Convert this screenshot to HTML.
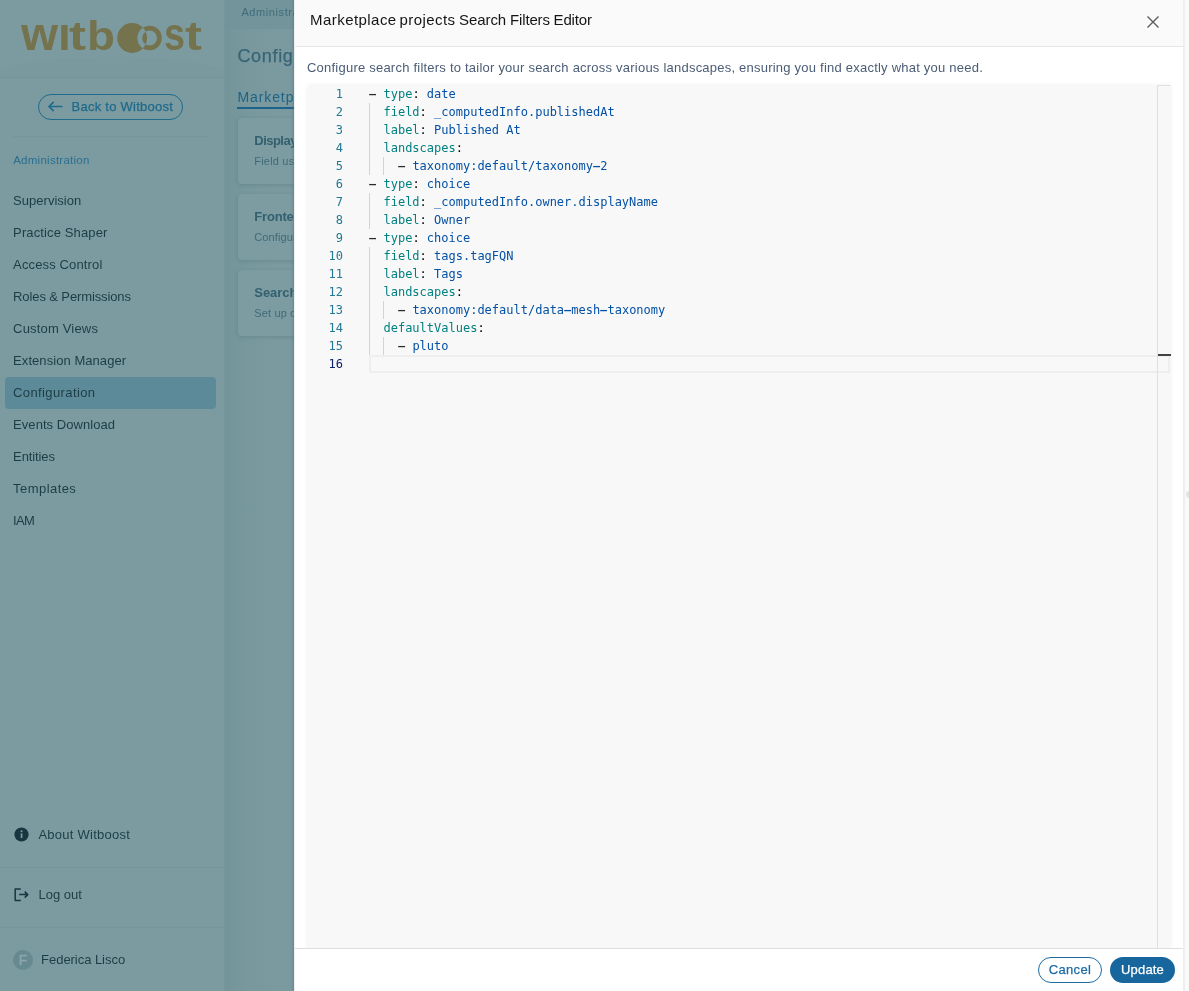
<!DOCTYPE html>
<html lang="en">
<head>
<meta charset="utf-8">
<title>Witboost - Configuration</title>
<style>
*{box-sizing:border-box;margin:0;padding:0}
html,body{width:1189px;height:991px;overflow:hidden;background:#79989d;font-family:"Liberation Sans",sans-serif}
.t{position:absolute;white-space:nowrap}
#sidebar,#main,#drawer,#editor{will-change:transform}
#sidebar{position:absolute;left:0;top:0;width:225px;height:991px;background:#7c9ba0;z-index:2;border-right:1px solid #75979c}
#main{position:absolute;left:224px;top:0;width:80px;height:991px;background:linear-gradient(90deg,#739499 0,#75969a 10px,#78989d 24px,#7a999e 38px,#7b9a9f 52px,#7b9a9f 100%);overflow:hidden}
#crumb{position:absolute;left:0;top:0;width:80px;height:29px;background:#73949a}
.hr{position:absolute;height:1px;background:#769599}
#sel{position:absolute;left:5px;top:377px;width:211px;height:32px;border-radius:4px;background:#5c8a98}
#back{position:absolute;left:38px;top:94px;width:145px;height:26px;border:1px solid #216b8c;border-radius:13px}
.card{position:absolute;left:14px;width:80px;height:66px;background:#7d9ca1;border-radius:4px;box-shadow:0 1px 4px rgba(50,85,95,.24)}
#tabline{position:absolute;left:13px;top:107px;width:80px;height:2px;background:#1b638a}
#drawer{position:absolute;left:294px;top:0;width:890px;height:991px;background:#fff;z-index:3;border-left:1px solid #edf0f0;box-shadow:-1px 0 2px rgba(80,115,125,.55)}
#dhead{position:absolute;left:0;top:0;right:0;height:47px;background:#fafafa;border-bottom:1px solid #e6e6e6}
#strip{position:absolute;left:1183px;top:0;width:6px;height:991px;background:#fafafa;z-index:4;overflow:hidden;border-left:2px solid #eeeeee}
#knob{position:absolute;left:1px;top:490.7px;width:7.5px;height:7.5px;border-radius:4px;background:#e3e3e3}
#editor{position:absolute;left:12px;top:85px;width:864px;height:863px;background:#f8f8f8;border-radius:4px 0 0 0;box-shadow:0 0 4px rgba(0,0,0,.06);overflow:hidden;font-family:"DejaVu Sans Mono","Liberation Mono",monospace;font-size:12px}
.ln{position:absolute;left:0;width:36px;text-align:right;height:18px;line-height:18px;color:#237893}
.ln.cur{color:#0b216f}
.cl{position:absolute;left:62px;height:18px;line-height:18px;white-space:pre}
.k{color:#008080}.p{color:#000}.v{color:#0451a5}.d{display:inline-block;transform:translateY(-0.5px) scale(2.25,1.3)}.p .d{color:#2b2b2b}
.g{position:absolute;width:1px;background:#d3d3d3}
#curline{position:absolute;left:62px;top:270px;width:801px;height:18px;border:2px solid #eeeeee}
#ruler{position:absolute;left:850px;top:0;width:14px;height:863px;border-left:1px solid #e0e0e0;border-top:1px solid #e0e0e0}
#rmark{position:absolute;left:0;top:268px;width:13px;height:2px;background:#424242}
#dfoot{position:absolute;left:0;right:0;top:948px;height:43px;border-top:1px solid #dedede;background:#fff}
.btn{position:absolute;top:957px;height:26px;border-radius:13px;padding:0;margin:0;font-family:"Liberation Sans",sans-serif;font-size:13px;line-height:18px;text-align:center;appearance:none;-webkit-appearance:none;display:block}
</style>
</head>
<body>
<div id="main">
<div id="crumb"></div>
<div id="tabline"></div>
<div class="card" style="top:118px"></div>
<div class="card" style="top:194px"></div>
<div class="card" style="top:270px"></div>
<div class="t" style="left:17.4px;top:5.2px;font-size:11px;line-height:15px;color:#3e6c7d;letter-spacing:0.593px">Administration</div>
<div class="t" style="left:13.4px;top:43.5px;font-size:18px;line-height:25px;color:#376577;letter-spacing:0.686px;-webkit-text-stroke:0.25px #376577">Configuration</div>
<div class="t" style="left:13.4px;top:86.5px;font-size:14px;line-height:20px;color:#1d6487;letter-spacing:0.912px">Marketplace</div>
<div class="t" style="left:30.3px;top:131.9px;font-size:13px;line-height:18px;color:#33606f;letter-spacing:-0.530px;font-weight:bold">Display name</div>
<div class="t" style="left:30.3px;top:153.8px;font-size:11px;line-height:15px;color:#3f6a78;letter-spacing:0.190px">Field used</div>
<div class="t" style="left:30.3px;top:207.9px;font-size:13px;line-height:18px;color:#33606f;letter-spacing:-0.200px;font-weight:bold">Frontend</div>
<div class="t" style="left:30.3px;top:229.8px;font-size:11px;line-height:15px;color:#3f6a78;letter-spacing:0.120px">Configure</div>
<div class="t" style="left:30.3px;top:283.9px;font-size:13px;line-height:18px;color:#33606f;letter-spacing:-0.050px;font-weight:bold">Search filters</div>
<div class="t" style="left:30.3px;top:305.8px;font-size:11px;line-height:15px;color:#3f6a78;letter-spacing:0.130px">Set up custom</div>
</div>
<nav id="sidebar">
<svg id="logo" style="position:absolute;left:0;top:0" width="224" height="77" viewBox="0 0 224 77">
<g fill="#74734d" font-family="Liberation Sans, sans-serif" font-weight="bold" font-size="46">
<text x="21" y="50.3" textLength="37" lengthAdjust="spacingAndGlyphs">w</text>
<text x="58" y="50.3">ı</text>
<text x="69" y="50.3" font-size="41" textLength="17" lengthAdjust="spacingAndGlyphs">t</text>
<text x="87" y="50.3" font-size="41" textLength="28" lengthAdjust="spacingAndGlyphs">b</text>
<text x="164" y="50.3" textLength="21" lengthAdjust="spacingAndGlyphs">s</text>
<text x="185" y="50.3" font-size="41" textLength="17" lengthAdjust="spacingAndGlyphs">t</text>
</g>
<path fill="#74734d" fill-rule="evenodd" d="M117.2 38a14.9 14.9 0 1 0 29.8 0a14.9 14.9 0 1 0 -29.8 0zM137.35 38a12.25 12.25 0 1 0 24.5 0a12.25 12.25 0 1 0 -24.5 0zM142.2 38a7.4 7.4 0 1 0 14.8 0a7.4 7.4 0 1 0 -14.8 0z"/>
</svg>
<div style="position:absolute;left:0;top:54px;width:224px;height:23px;background:radial-gradient(ellipse 125px 21px at 112px 23px,rgba(40,80,90,.028) 0,rgba(40,80,90,.028) 92%,rgba(40,80,90,0) 100%)"></div>
<div class="hr" style="left:0;top:77px;width:224px"></div>
<div id="back"></div>
<div class="hr" style="left:13px;top:136px;width:195px"></div>
<div id="sel"></div>
<div class="hr" style="left:0;top:867px;width:224px"></div>
<div class="hr" style="left:0;top:927px;width:224px"></div>
<svg style="position:absolute;left:46px;top:99px" width="18" height="15" viewBox="0 0 18 15"><path d="M15.8 7.5H3M7.2 3.4L3 7.5l4.2 4.1" fill="none" stroke="#1f6a8b" stroke-width="1.7" stroke-linecap="round" stroke-linejoin="round"/></svg>
<svg style="position:absolute;left:13px;top:826px" width="17" height="17" viewBox="0 0 17 17"><circle cx="8.5" cy="8.5" r="7.1" fill="#17363f"/><rect x="7.7" y="7.4" width="1.7" height="4.6" fill="#7c9ba0"/><circle cx="8.55" cy="5.3" r="1.05" fill="#7c9ba0"/></svg>
<svg style="position:absolute;left:12px;top:886px" width="19" height="17" viewBox="0 0 19 17"><path d="M8.8 2.9H3.2v11.5h5.6M7.2 8.6h8.2M12.7 5.6l3 3l-3 3" fill="none" stroke="#17363f" stroke-width="1.5" stroke-linejoin="round" stroke-linecap="butt"/></svg>
<div style="position:absolute;left:13px;top:950px;width:20px;height:20px;border-radius:10px;background:#678990;color:#8ca7ab;font-size:14px;line-height:20px;text-align:center;-webkit-text-stroke:0.3px #8ca7ab">F</div>
<div class="t" style="left:71.6px;top:97.5px;font-size:13px;line-height:18px;color:#1f6a8b;letter-spacing:0.247px;-webkit-text-stroke:0.25px #1f6a8b">Back to Witboost</div>
<div class="t" style="left:13.2px;top:152.3px;font-size:11.5px;line-height:16px;color:#2a6f8f;letter-spacing:0.259px">Administration</div>
<div class="t" style="left:13.1px;top:191.5px;font-size:13px;line-height:18px;color:#1d3d46;letter-spacing:0.024px">Supervision</div>
<div class="t" style="left:13.1px;top:223.5px;font-size:13px;line-height:18px;color:#1d3d46;letter-spacing:0.127px">Practice Shaper</div>
<div class="t" style="left:13.1px;top:255.5px;font-size:13px;line-height:18px;color:#1d3d46;letter-spacing:0.141px">Access Control</div>
<div class="t" style="left:13.1px;top:287.5px;font-size:13px;line-height:18px;color:#1d3d46;letter-spacing:-0.113px">Roles &amp; Permissions</div>
<div class="t" style="left:13.1px;top:319.5px;font-size:13px;line-height:18px;color:#1d3d46;letter-spacing:0.180px">Custom Views</div>
<div class="t" style="left:13.1px;top:351.5px;font-size:13px;line-height:18px;color:#1d3d46;letter-spacing:0.058px">Extension Manager</div>
<div class="t" style="left:13.1px;top:383.5px;font-size:13px;line-height:18px;color:#1d3d46;letter-spacing:0.382px">Configuration</div>
<div class="t" style="left:13.1px;top:415.5px;font-size:13px;line-height:18px;color:#1d3d46;letter-spacing:0.055px">Events Download</div>
<div class="t" style="left:13.1px;top:447.5px;font-size:13px;line-height:18px;color:#1d3d46;letter-spacing:-0.118px">Entities</div>
<div class="t" style="left:13.1px;top:479.5px;font-size:13px;line-height:18px;color:#1d3d46;letter-spacing:0.439px">Templates</div>
<div class="t" style="left:13.1px;top:511.5px;font-size:13px;line-height:18px;color:#1d3d46;letter-spacing:-0.708px">IAM</div>
<div class="t" style="left:38.4px;top:825.5px;font-size:13px;line-height:18px;color:#1d3d46;letter-spacing:0.260px">About Witboost</div>
<div class="t" style="left:38.4px;top:885.8px;font-size:13px;line-height:18px;color:#1d3d46;letter-spacing:0.032px">Log out</div>
<div class="t" style="left:41.1px;top:951.0px;font-size:13px;line-height:18px;color:#1d3d46;letter-spacing:-0.039px">Federica Lisco</div>
</nav>
<div id="drawer" role="dialog">
<div id="dhead"></div>
<div class="t" id="dtitle" style="left:0;top:9.3px;width:600px;height:21px;font-size:15px;line-height:21px;color:#151515;white-space:pre"><span style="position:absolute;left:15.04px;top:0;letter-spacing:0.444px">Marketplace </span><span style="position:absolute;left:104.48px;top:0;letter-spacing:0.429px">projects </span><span style="position:absolute;left:163.94px;top:0;letter-spacing:-0.060px">Search </span><span style="position:absolute;left:215.02px;top:0;letter-spacing:-0.150px">Filters </span><span style="position:absolute;left:258.52px;top:0;letter-spacing:-0.132px">Editor</span></div>
<svg style="position:absolute;left:851.3px;top:15.1px" width="14" height="14" viewBox="0 0 14 14"><path d="M1.5 1.5l11 11M12.5 1.5L1.5 12.5" stroke="#5c5c5c" stroke-width="1.4" fill="none"/></svg>
<div id="editor">
<div class="ln" style="top:0px">1</div>
<div class="cl" style="top:0px"><span class="p"><span class="d">-</span> </span><span class="k">type</span><span class="p">: </span><span class="v">date</span></div>
<div class="ln" style="top:18px">2</div>
<div class="cl" style="top:18px"><span class="p">  </span><span class="k">field</span><span class="p">: </span><span class="v">_computedInfo.publishedAt</span></div>
<div class="ln" style="top:36px">3</div>
<div class="cl" style="top:36px"><span class="p">  </span><span class="k">label</span><span class="p">: </span><span class="v">Published At</span></div>
<div class="ln" style="top:54px">4</div>
<div class="cl" style="top:54px"><span class="p">  </span><span class="k">landscapes</span><span class="p">:</span></div>
<div class="ln" style="top:72px">5</div>
<div class="cl" style="top:72px"><span class="p">    <span class="d">-</span> </span><span class="v">taxonomy:default/taxonomy<span class="d">-</span>2</span></div>
<div class="ln" style="top:90px">6</div>
<div class="cl" style="top:90px"><span class="p"><span class="d">-</span> </span><span class="k">type</span><span class="p">: </span><span class="v">choice</span></div>
<div class="ln" style="top:108px">7</div>
<div class="cl" style="top:108px"><span class="p">  </span><span class="k">field</span><span class="p">: </span><span class="v">_computedInfo.owner.displayName</span></div>
<div class="ln" style="top:126px">8</div>
<div class="cl" style="top:126px"><span class="p">  </span><span class="k">label</span><span class="p">: </span><span class="v">Owner</span></div>
<div class="ln" style="top:144px">9</div>
<div class="cl" style="top:144px"><span class="p"><span class="d">-</span> </span><span class="k">type</span><span class="p">: </span><span class="v">choice</span></div>
<div class="ln" style="top:162px">10</div>
<div class="cl" style="top:162px"><span class="p">  </span><span class="k">field</span><span class="p">: </span><span class="v">tags.tagFQN</span></div>
<div class="ln" style="top:180px">11</div>
<div class="cl" style="top:180px"><span class="p">  </span><span class="k">label</span><span class="p">: </span><span class="v">Tags</span></div>
<div class="ln" style="top:198px">12</div>
<div class="cl" style="top:198px"><span class="p">  </span><span class="k">landscapes</span><span class="p">:</span></div>
<div class="ln" style="top:216px">13</div>
<div class="cl" style="top:216px"><span class="p">    <span class="d">-</span> </span><span class="v">taxonomy:default/data<span class="d">-</span>mesh<span class="d">-</span>taxonomy</span></div>
<div class="ln" style="top:234px">14</div>
<div class="cl" style="top:234px"><span class="p">  </span><span class="k">defaultValues</span><span class="p">:</span></div>
<div class="ln" style="top:252px">15</div>
<div class="cl" style="top:252px"><span class="p">    <span class="d">-</span> </span><span class="v">pluto</span></div>
<div class="ln cur" style="top:270px">16</div>
<div class="g" style="left:62px;top:18px;height:72px"></div>
<div class="g" style="left:62px;top:108px;height:36px"></div>
<div class="g" style="left:62px;top:162px;height:108px"></div>
<div class="g" style="left:76.4px;top:72px;height:18px"></div>
<div class="g" style="left:76.4px;top:216px;height:18px"></div>
<div class="g" style="left:76.4px;top:252px;height:18px"></div>
<div id="curline"></div>
<div id="ruler"><div id="rmark"></div></div>
</div>
<div id="dfoot"></div>
<button class="btn" style="left:743px;width:64px;border:1px solid #1c6ca3;background:#fff;color:#1c6ca3;-webkit-text-stroke:0.25px #1c6ca3;letter-spacing:0.355px">Cancel</button>
<button class="btn" style="left:815px;width:65px;border:0;background:#17679e;color:#fff;-webkit-text-stroke:0.25px #fff;letter-spacing:0.18px">Update</button>
<div class="t" style="left:12.0px;top:59.0px;font-size:13px;line-height:18px;color:#4b5d75;letter-spacing:0.225px">Configure search filters to tailor your search across various landscapes, ensuring you find exactly what you need.</div>
</div>
<div id="strip"><div id="knob"></div></div>
</body>
</html>
